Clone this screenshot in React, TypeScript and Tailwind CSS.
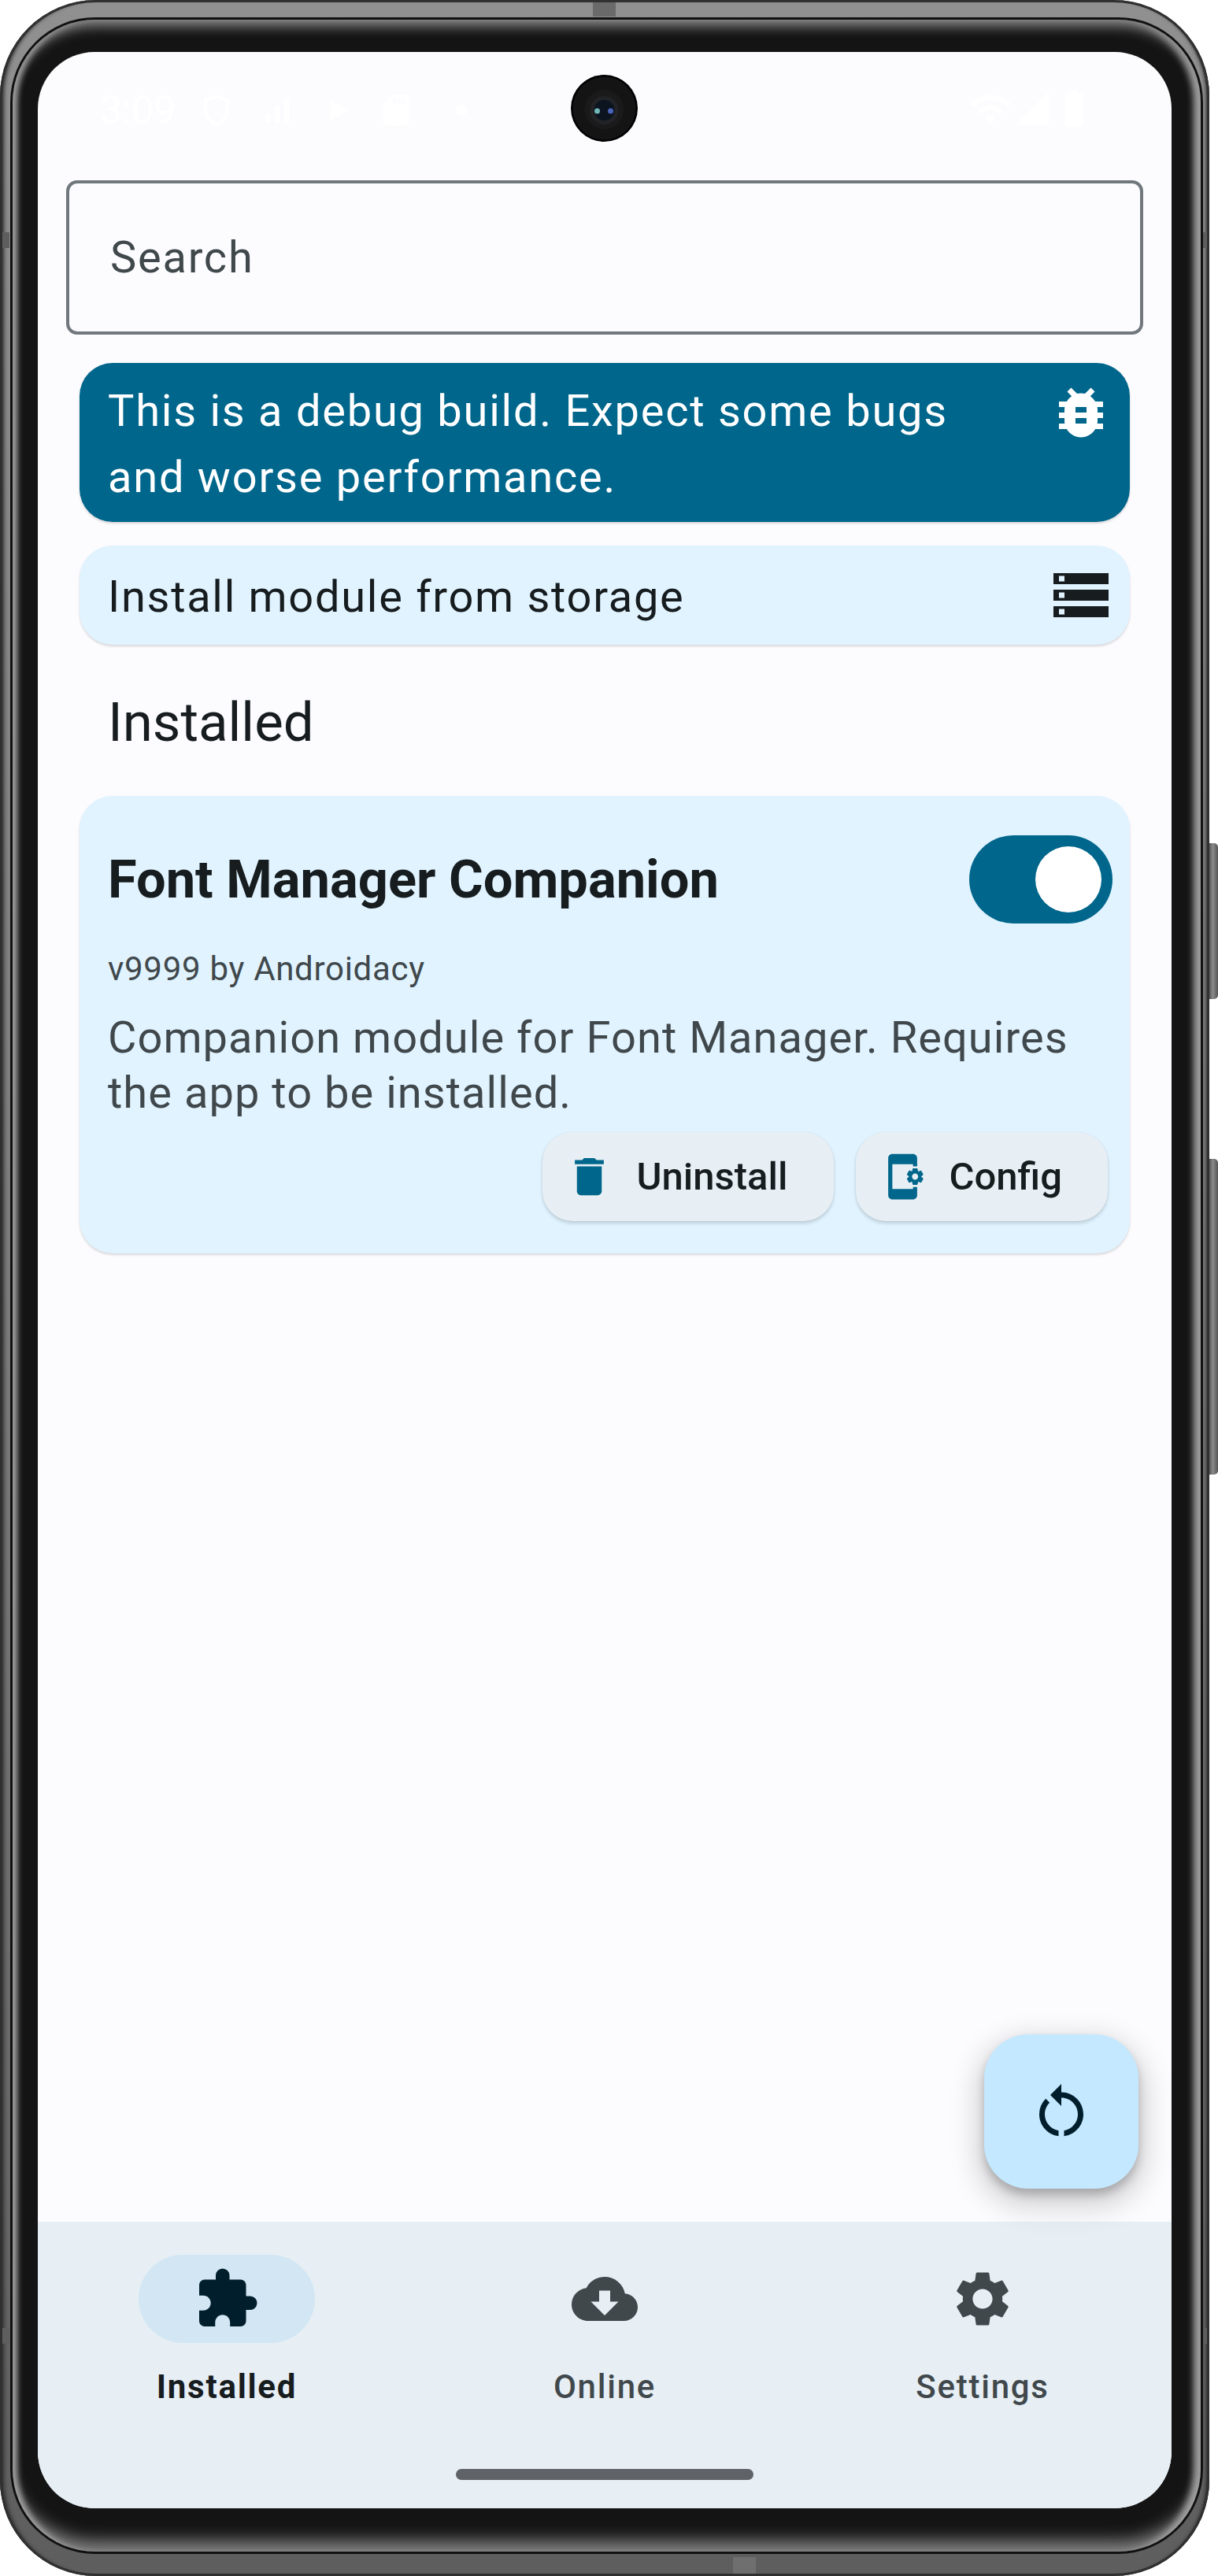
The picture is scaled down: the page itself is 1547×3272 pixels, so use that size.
import React from 'react';
import {
  MdAppSettingsAlt,
  MdBatteryFull,
  MdBugReport,
  MdCloudDownload,
  MdDelete,
  MdExtension,
  MdOutlineShield,
  MdPlayArrow,
  MdRestartAlt,
  MdSdCard,
  MdSettings,
  MdSignalCellular4Bar,
  MdSignalCellularAlt,
  MdStorage,
  MdWifi,
} from 'react-icons/md';

function StatusBar() {
  return (
    <div className="relative flex h-[163px] items-start justify-between pl-[79px] pr-[96px] pt-[44px] text-white">
      <div className="flex items-center gap-[28px]">
        <span className="text-[50px] leading-[60px]">3:09</span>
        <MdOutlineShield className="h-[48px] w-[48px]" />
        <MdSignalCellularAlt className="h-[48px] w-[48px]" />
        <MdPlayArrow className="h-[48px] w-[48px]" />
        <MdSdCard className="h-[48px] w-[48px]" />
        <div className="ml-[24px] h-[14px] w-[14px] rounded-full bg-white" />
      </div>
      <div className="flex items-center">
        <MdWifi className="h-[56px] w-[56px]" />
        <MdSignalCellular4Bar className="h-[50px] w-[50px]" />
        <MdBatteryFull className="h-[56px] w-[56px]" />
      </div>
      {/* camera hole */}
      <svg className="absolute left-[677px] top-[29px] h-[85px] w-[85px]" viewBox="0 0 85 85">
        <circle cx="42.5" cy="42.5" r="42.5" fill="#000" />
        <circle cx="42.5" cy="42.5" r="40" fill="#141414" />
        <circle cx="42.5" cy="44" r="25" fill="#1a1a1a" />
        <circle cx="42.5" cy="45" r="18" fill="#222326" />
        <circle cx="42.5" cy="45" r="13" fill="#0c1420" />
        <circle cx="33.5" cy="46" r="3.5" fill="#6fb8b8" />
        <circle cx="50.5" cy="46" r="3.5" fill="#4a64b8" />
      </svg>
    </div>
  );
}

function ActionButton({ icon, label }: { icon: React.ReactNode; label: string }) {
  return (
    <button className="flex h-[113px] items-center rounded-[38px] bg-[#e7eff5] pl-[28px] pr-[58px] shadow-[0_3px_4px_rgba(0,0,0,0.15),0_0_2px_rgba(0,0,0,0.08)]">
      {icon}
      <span className="ml-[28px] text-[49px] font-medium leading-[60px] text-[#171c1f]">{label}</span>
    </button>
  );
}

function NavItem({ icon, label, active }: { icon: React.ReactNode; label: string; active?: boolean }) {
  return (
    <div className="flex flex-1 flex-col items-center">
      <div className={`flex h-[112px] w-[224px] items-center justify-center rounded-[56px] ${active ? 'bg-[#d2e6f4] text-[#001e2c]' : 'text-[#40484c]'}`}>
        {icon}
      </div>
      <span className={`mt-[26px] text-[42px] leading-[60px] tracking-[1.75px] ${active ? 'font-bold text-[#171c1f]' : 'font-medium text-[#40484c]'}`}>
        {label}
      </span>
    </div>
  );
}

export default function App() {
  return (
    <div className="flex h-[3272px] w-[1547px] overflow-hidden bg-white font-[family-name:Roboto,sans-serif]">
      {/* phone body */}
      <div className="relative h-[3272px] w-[1536px] shrink-0 rounded-[122px] bg-gradient-to-b from-[#909090] via-[#7c7c7c] to-[#5e5e5e] pb-[28px] pl-[13px] pr-[8px] pt-[22px] shadow-[inset_0_0_0_3px_#303030,inset_7px_0_5px_-2px_#2e2e2e,inset_-6px_0_4px_-2px_#2e2e2e]">
        {/* antenna bands */}
        <div className="absolute left-[753px] top-[3px] h-[18px] w-[29px] bg-[#6a6a6a]" />
        <div className="absolute left-[931px] top-[3248px] h-[21px] w-[29px] bg-[#6f6f6f]" />
        <div className="absolute left-[3px] top-[295px] h-[20px] w-[9px] bg-[#5e5e5e]" />
        <div className="absolute left-[3px] top-[2957px] h-[20px] w-[9px] bg-[#5e5e5e]" />
        <div className="absolute right-[3px] top-[295px] h-[20px] w-[6px] bg-[#5e5e5e]" />
        <div className="absolute right-[3px] top-[2957px] h-[20px] w-[6px] bg-[#5e5e5e]" />

        <div className="relative h-full w-full rounded-[108px] bg-[#111] p-[3px]">
          <div className="h-full w-full rounded-[105px] bg-[#141414] pb-[23px] pl-[32px] pr-[19px] pt-[41px] shadow-[inset_0_18px_16px_-10px_#8c8c8c,inset_9px_0_7px_-3px_#a0a0a0,inset_-14px_0_9px_-5px_#a0a0a0,inset_0_-24px_20px_-10px_#808080]">
            {/* screen */}
            <div className="relative flex h-[3120px] w-[1440px] flex-col overflow-hidden rounded-[72px] bg-[#fcfcff]">
              <StatusBar />

              <div className="mx-[36px] flex h-[196px] items-center rounded-[14px] border-[4px] border-[#70787d] pl-[52px]">
                <span className="text-[56px] leading-[84px] tracking-[1.75px] text-[#40484c]">Search</span>
              </div>

              <div className="mx-[53px] mt-[36px] flex h-[202px] justify-between rounded-[42px] bg-[#00668b] pl-[36px] pr-[20px] pt-[19px] text-white shadow-[0_2px_3px_rgba(0,0,0,0.15)]">
                <p className="w-[1120px] text-[56px] leading-[84px] tracking-[1.75px]">
                  This is a debug build. Expect some bugs and worse performance.
                </p>
                <MdBugReport className="mt-[2px] h-[84px] w-[84px] shrink-0" />
              </div>

              <div className="mx-[53px] mt-[30px] flex h-[126px] items-center justify-between rounded-[42px] bg-[#e0f3ff] pl-[36px] pr-[20px] text-[#171c1f] shadow-[0_2px_3px_rgba(0,0,0,0.15)]">
                <span className="pt-[4px] text-[56px] leading-[84px] tracking-[1.7px]">Install module from storage</span>
                <MdStorage className="h-[84px] w-[84px] shrink-0" />
              </div>

              <h2 className="ml-[89px] mt-[54px] text-[69px] font-normal leading-[90px] text-[#171c1f]">Installed</h2>

              <div className="mx-[53px] mt-[48px] flex h-[581px] flex-col rounded-[42px] bg-[#e0f3ff] pl-[36px] pr-[22px] shadow-[0_2px_3px_rgba(0,0,0,0.15)]">
                <div className="mt-[50px] flex items-center justify-between">
                  <span className="text-[66.8px] font-bold leading-[112px] text-[#171c1f]">Font Manager Companion</span>
                  <div className="flex h-[112px] w-[182px] items-center justify-end rounded-[56px] bg-[#00668b] pr-[14px]">
                    <div className="h-[84px] w-[84px] rounded-full bg-white" />
                  </div>
                </div>
                <span className="mt-[28px] text-[42px] leading-[60px] tracking-[0.7px] text-[#40484c]">v9999 by Androidacy</span>
                <p className="mt-[22px] w-[1260px] text-[56px] leading-[70px] tracking-[1.04px] text-[#40484c]">
                  Companion module for Font Manager. Requires the app to be installed.
                </p>
                <div className="mt-[15px] flex justify-end gap-[28px] pr-[6px]">
                  <ActionButton label="Uninstall" icon={<MdDelete className="h-[63px] w-[63px] shrink-0 text-[#00668b]" />} />
                  <ActionButton label="Config" icon={<MdAppSettingsAlt className="h-[63px] w-[63px] shrink-0 text-[#00668b]" />} />
                </div>
              </div>

              <div className="flex-1" />

              <div className="flex h-[364px] flex-col bg-[#e7eff5] pt-[42px]">
                <div className="flex">
                  <NavItem active label="Installed" icon={<MdExtension className="h-[84px] w-[84px]" />} />
                  <NavItem label="Online" icon={<MdCloudDownload className="h-[84px] w-[84px]" />} />
                  <NavItem label="Settings" icon={<MdSettings className="h-[84px] w-[84px]" />} />
                </div>
                <div className="mx-auto mt-[74px] h-[14px] w-[378px] rounded-[7px] bg-[#5f6367]" />
              </div>

              {/* refresh fab */}
              <button className="absolute left-[1202px] top-[2518px] flex h-[196px] w-[196px] items-center justify-center rounded-[56px] bg-[#c3e8ff] text-[#001e2c] shadow-[0_14px_36px_8px_rgba(0,0,0,0.18),0_8px_12px_rgba(0,0,0,0.2)]">
                <MdRestartAlt className="h-[84px] w-[84px]" />
              </button>
            </div>
          </div>
        </div>
      </div>

      {/* side buttons */}
      <div className="ml-[-2px] flex w-[13px] flex-col pt-[1071px]">
        <div className="h-[198px] w-[13px] rounded-r-[5px] bg-gradient-to-r from-[#444] via-[#8a8a8a] to-[#555]" />
        <div className="mt-[203px] h-[401px] w-[13px] rounded-r-[5px] bg-gradient-to-r from-[#444] via-[#8a8a8a] to-[#555]" />
      </div>
    </div>
  );
}
